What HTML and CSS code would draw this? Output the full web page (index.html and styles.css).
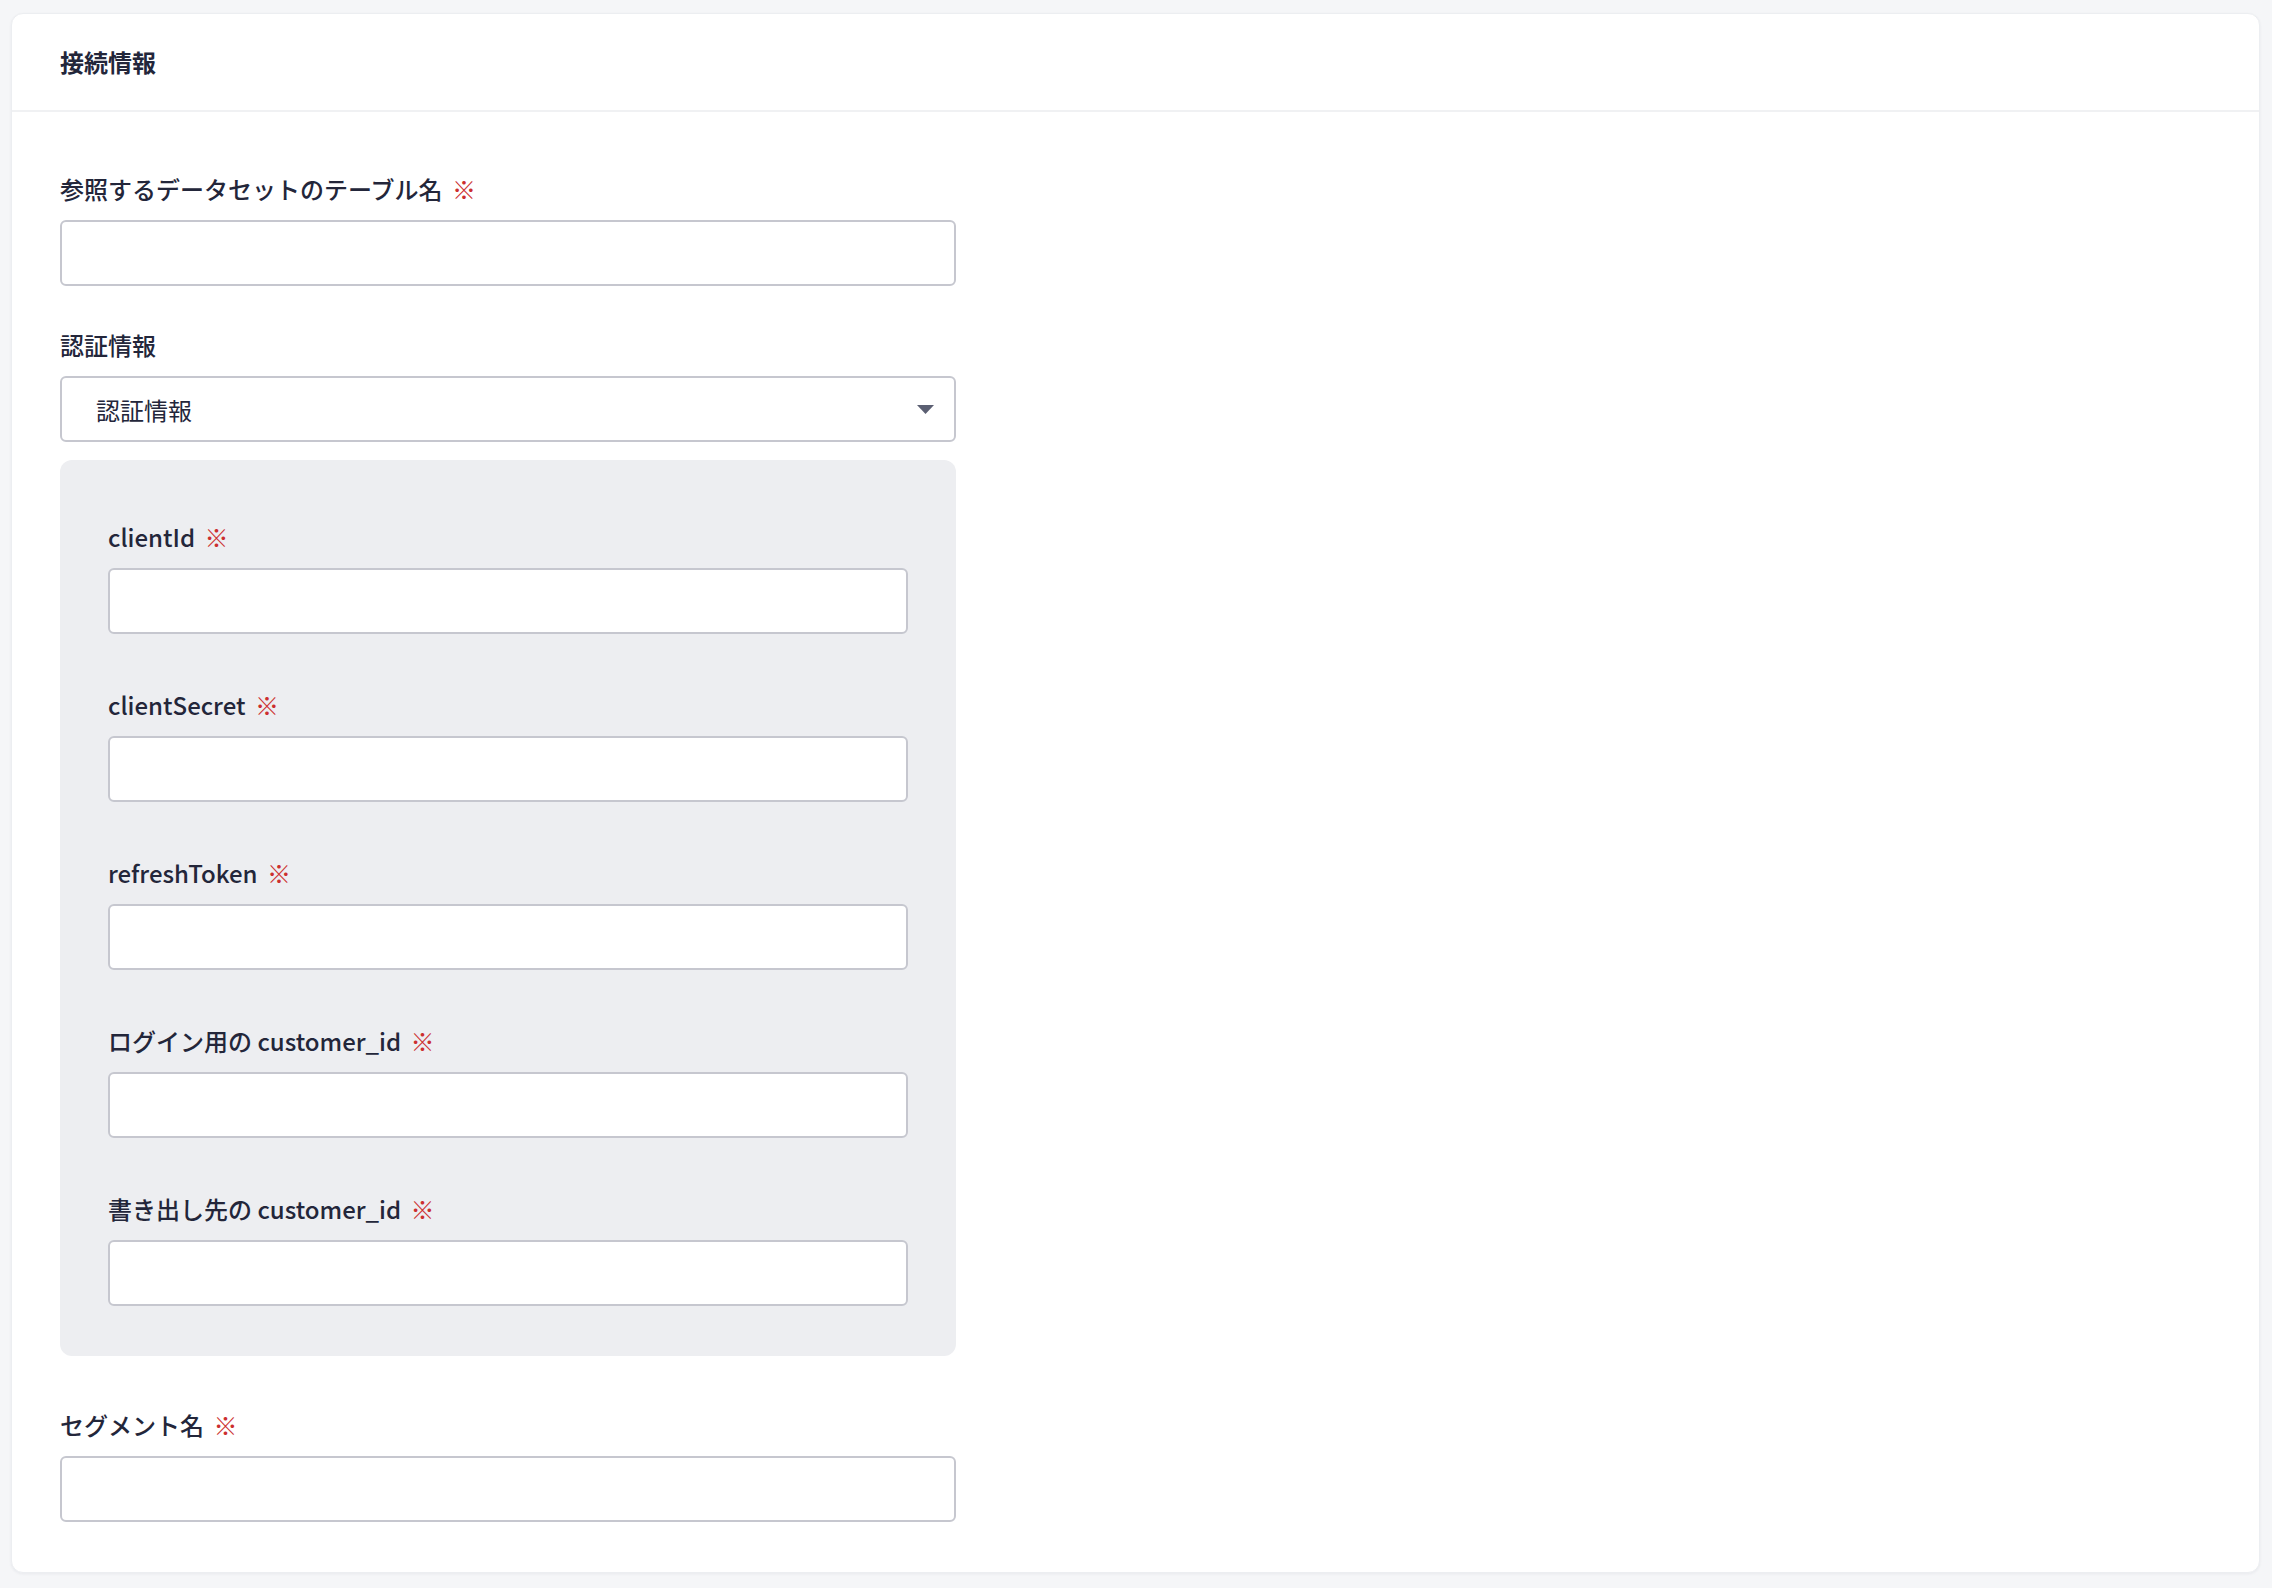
FILE: index.html
```html
<!DOCTYPE html>
<html lang="ja">

<head>
    <meta charset="UTF-8">
    <meta name="viewport" content="width=device-width, initial-scale=1.0">
    <title>接続情報</title>
    <link rel="stylesheet" href="styles.css">
</head>

<body>
    <section class="card">
        <header class="card-head">
            <h2>接続情報</h2>
        </header>

        <div class="card-body">
            <div class="field">
                <label>参照するデータセットのテーブル名 <span class="req">※</span></label>
                <div class="input"></div>
            </div>

            <div class="field">
                <label>認証情報</label>
                <div class="input select">
                    <span>認証情報</span>
                    <svg width="17" height="9" viewBox="0 0 17 9"><path d="M0 0h17L8.5 9z" fill="#5b5f72" /></svg>
                </div>
            </div>

            <div class="subbox">
                <div class="field">
                    <label>clientId <span class="req">※</span></label>
                    <div class="input"></div>
                </div>
                <div class="field">
                    <label>clientSecret <span class="req">※</span></label>
                    <div class="input"></div>
                </div>
                <div class="field">
                    <label>refreshToken <span class="req">※</span></label>
                    <div class="input"></div>
                </div>
                <div class="field">
                    <label>ログイン用の customer_id <span class="req">※</span></label>
                    <div class="input"></div>
                </div>
                <div class="field">
                    <label>書き出し先の customer_id <span class="req">※</span></label>
                    <div class="input"></div>
                </div>
            </div>

            <div class="field">
                <label>セグメント名 <span class="req">※</span></label>
                <div class="input"></div>
            </div>
        </div>
    </section>
</body>

</html>
```

FILE: styles.css
```css
* {
    margin: 0;
    padding: 0;
    box-sizing: border-box;
}

body {
    background: #f5f6f8;
    padding: 13px 12px 16px 11px;
    font-family: "Noto Sans CJK JP", "Noto Sans", sans-serif;
    color: #23263a;
}

.card {
    background: #fff;
    border: 1px solid #eceef1;
    border-radius: 12px;
    box-shadow: 0 1px 3px rgba(30, 35, 60, 0.06);
}

.card-head {
    height: 98px;
    display: flex;
    align-items: center;
    padding: 0 48px;
    border-bottom: 2px solid #f0f1f3;
}

.card-head h2 {
    font-size: 24px;
    font-weight: 700;
    line-height: 1;
}

.card-body {
    padding: 59px 48px 50px;
    display: flex;
    flex-direction: column;
}

.card-body>.field+.field {
    margin-top: 41px;
}

.field label {
    display: block;
    font-size: 24px;
    font-weight: 500;
    line-height: 35px;
    margin-bottom: 14px;
}

.req {
    color: #cc2f2f;
    font-weight: 400;
    margin-left: 4px;
}

.input {
    width: 896px;
    height: 66px;
    background: #fff;
    border: 2px solid #c6c7cf;
    border-radius: 6px;
}

.select {
    display: flex;
    align-items: center;
    justify-content: space-between;
    padding: 0 20px 0 34px;
    font-size: 24px;
}

.subbox {
    width: 896px;
    margin-top: 18px;
    margin-bottom: 51px;
    padding: 59px 48px 50px;
    background: #edeef1;
    border-radius: 12px;
}

.subbox .input {
    width: 100%;
}

.subbox .field+.field {
    margin-top: 53px;
}
```
